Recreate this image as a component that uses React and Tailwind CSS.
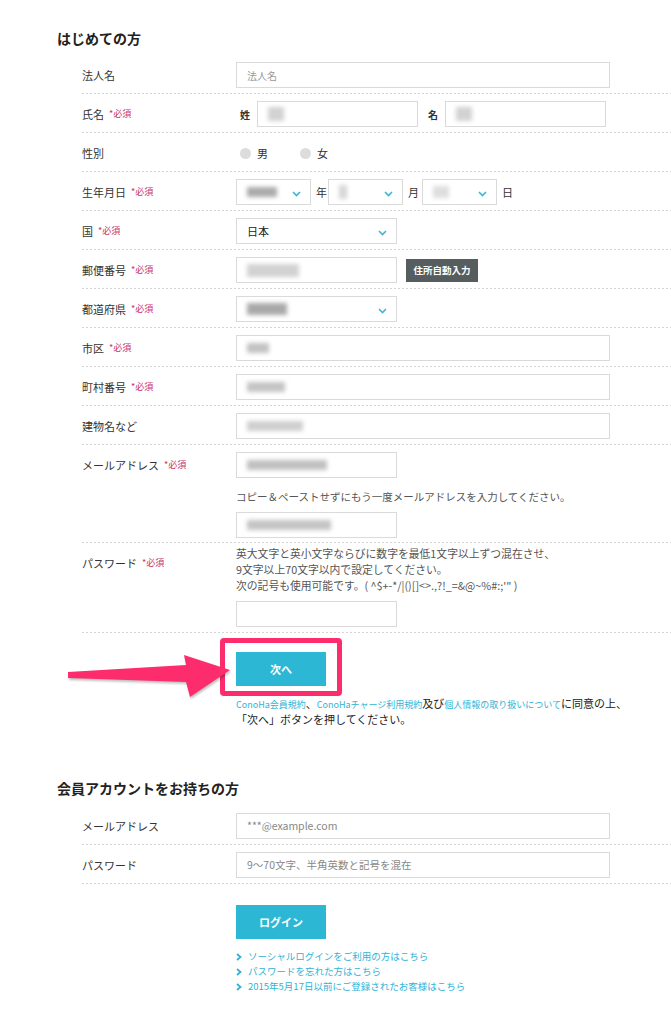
import React from "react";

const Dots = () => (
  <div className="h-px w-full bg-[linear-gradient(to_right,#d4d4d4_50%,transparent_50%)] bg-[length:4px_1px] bg-repeat-x" />
);

const Req = () => (
  <span className="ml-[5px] text-[9px] text-[#c8326a]">*必須</span>
);

const Smudge = ({ cls }) => (
  <span className={"block h-[10px] blur-[2px] " + cls} />
);

const Chevron = () => (
  <svg width="9" height="6" viewBox="0 0 9 6" className="absolute right-[9px] top-[11px]">
    <polyline points="1,1 4.5,4.5 8,1" fill="none" stroke="#3cb6d8" strokeWidth="1.6" />
  </svg>
);

const Box = ({ w, children, select }) => (
  <div className={"relative flex h-[26px] items-center border border-[#dadada] bg-white px-[10px] " + w}>
    {children}
    {select && <Chevron />}
  </div>
);

const Row = ({ label, req, children, labelCls = "" }) => (
  <>
    <div className="flex pt-[7px] pb-[5px]">
      <div className={"flex h-[26px] w-[154px] shrink-0 items-center text-[11px] " + labelCls}>
        {label}
        {req && <Req />}
      </div>
      <div className="flex-1">{children}</div>
    </div>
    <Dots />
  </>
);

const Radio = ({ label }) => (
  <div className="flex items-center">
    <span className="h-[11px] w-[11px] rounded-full bg-[#dcdcdc]" />
    <span className="ml-[6px] text-[11px]">{label}</span>
  </div>
);

const Arrow = () => (
  <svg
    width="175"
    height="65"
    viewBox="0 0 175 65"
    className="absolute left-[-176px] top-[-12px] drop-shadow-[1px_2px_1px_rgba(0,0,0,0.25)]"
  >
    <polygon
      points="8,32 126,25 124,15 170,30 130,57 126,42 8,38"
      fill="#fd2c6d"
    />
  </svg>
);

const Link = ({ children }) => (
  <div className="flex items-center leading-[15px]">
    <svg width="6" height="8" viewBox="0 0 6 8" className="mr-[6px]">
      <polyline points="1,1 4.5,4 1,7" fill="none" stroke="#2fb3d6" strokeWidth="1.8" />
    </svg>
    <span className="text-[9.5px] text-[#2fb3d6]">{children}</span>
  </div>
);

export default function App() {
  return (
    <div className="min-h-[1024px] w-[671px] bg-white pb-[30px] font-['Noto_Sans_CJK_JP',sans-serif] text-[#333]">
      <div className="pl-[57px] pt-[29px]">
        <h2 className="text-[14px] font-bold leading-[18px] text-[#222]">はじめての方</h2>
      </div>

      <div className="ml-[82px] mt-[8px]">
        <Row label="法人名">
          <Box w="w-[374px]">
            <span className="text-[10px] text-[#999]">法人名</span>
          </Box>
        </Row>

        <Row label="氏名" req>
          <div className="flex items-center">
            <span className="ml-[4px] text-[10px] font-bold">姓</span>
            <div className="ml-[7px]">
              <Box w="w-[161px]">
                <Smudge cls="w-[16px] h-[14px] bg-[#d2d2d2]" />
              </Box>
            </div>
            <span className="ml-[10px] text-[10px] font-bold">名</span>
            <div className="ml-[7px]">
              <Box w="w-[161px]">
                <Smudge cls="w-[16px] h-[14px] bg-[#d2d2d2]" />
              </Box>
            </div>
          </div>
        </Row>

        <Row label="性別">
          <div className="flex h-[26px] items-center gap-[32px] pl-[4px]">
            <Radio label="男" />
            <Radio label="女" />
          </div>
        </Row>

        <Row label="生年月日" req>
          <div className="flex items-center text-[11px]">
            <Box w="w-[75px]" select>
              <Smudge cls="w-[30px] bg-[#ababab]" />
            </Box>
            <span className="ml-[5px] mr-[1px]">年</span>
            <Box w="w-[75px]" select>
              <Smudge cls="w-[8px] h-[14px] bg-[#d6d6d6]" />
            </Box>
            <span className="ml-[5px] mr-[3px]">月</span>
            <Box w="w-[75px]" select>
              <Smudge cls="w-[16px] h-[12px] bg-[#dedede]" />
            </Box>
            <span className="ml-[5px]">日</span>
          </div>
        </Row>

        <Row label="国" req>
          <Box w="w-[161px]" select>
            <span className="text-[11px] text-[#222]">日本</span>
          </Box>
        </Row>

        <Row label="郵便番号" req>
          <div className="flex items-center">
            <Box w="w-[161px]">
              <Smudge cls="w-[52px] h-[13px] bg-[#d2d2d2]" />
            </Box>
            <button className="ml-[9px] h-[23px] w-[72px] bg-[#555d5e] text-[9.5px] font-bold text-white">
              住所自動入力
            </button>
          </div>
        </Row>

        <Row label="都道府県" req>
          <Box w="w-[161px]" select>
            <Smudge cls="w-[40px] h-[12px] bg-[#a9a9a9]" />
          </Box>
        </Row>

        <Row label="市区" req>
          <Box w="w-[374px]">
            <Smudge cls="w-[22px] bg-[#c2c2c2]" />
          </Box>
        </Row>

        <Row label="町村番号" req>
          <Box w="w-[374px]">
            <Smudge cls="w-[38px] bg-[#c4c4c4]" />
          </Box>
        </Row>

        <Row label="建物名など">
          <Box w="w-[374px]">
            <Smudge cls="w-[56px] h-[8px] bg-[#cfcfcf]" />
          </Box>
        </Row>

        <div className="flex pt-[7px] pb-[4px]">
          <div className="flex h-[26px] w-[154px] shrink-0 items-center text-[11px]">
            メールアドレス
            <Req />
          </div>
          <div className="flex-1">
            <Box w="w-[161px]">
              <Smudge cls="w-[80px] bg-[#c0c0c0]" />
            </Box>
            <p className="mt-[12px] text-[10.5px] leading-[14px] text-[#555]">
              コピー＆ペーストせずにもう一度メールアドレスを入力してください。
            </p>
            <div className="mt-[8px]">
              <Box w="w-[161px]">
                <Smudge cls="w-[84px] bg-[#c4c4c4]" />
              </Box>
            </div>
          </div>
        </div>
        <Dots />

        <div className="flex pt-[2px] pb-[5px]">
          <div className="flex h-[26px] w-[154px] shrink-0 items-center pt-[10px] text-[11px]">
            パスワード
            <Req />
          </div>
          <div className="flex-1">
            <p className="text-[10.8px] leading-[16px] text-[#555]">
              英大文字と英小文字ならびに数字を最低1文字以上ずつ混在させ、
              <br />
              9文字以上70文字以内で設定してください。
              <br />
              次の記号も使用可能です。( ^$+-*/|()[]{}&lt;&gt;.,?!_=&amp;@~%#:;'" )
            </p>
            <div className="mt-[8px]">
              <Box w="w-[161px]">
                <span />
              </Box>
            </div>
          </div>
        </div>
        <Dots />
      </div>

      <div className="ml-[236px] mt-[19px]">
        <div className="relative w-[90px]">
          <div className="absolute left-[-16px] top-[-14px] h-[58px] w-[122px] rounded-[4px] border-[5px] border-[#fd2c6d]" />
          <Arrow />
          <button className="relative h-[34px] w-[90px] bg-[#2cb7d5] text-[11px] font-bold text-white">
            次へ
          </button>
        </div>
        <div className="mt-[10px] text-[11px] leading-[15px] text-[#222]">
          <p>
            <span className="text-[9px] text-[#2fb3d6]">ConoHa会員規約</span>、
            <span className="text-[9px] text-[#2fb3d6]">ConoHaチャージ利用規約</span>及び
            <span className="text-[9px] text-[#2fb3d6]">個人情報の取り扱いについて</span>に同意の上、
          </p>
          <p>「次へ」ボタンを押してください。</p>
        </div>
      </div>

      <div className="pl-[57px] pt-[52px]">
        <h2 className="text-[14px] font-bold leading-[18px] text-[#222]">会員アカウントをお持ちの方</h2>
      </div>

      <div className="ml-[82px] mt-[9px]">
        <Row label="メールアドレス">
          <Box w="w-[374px]">
            <span className="text-[10.5px] text-[#888]">***@example.com</span>
          </Box>
        </Row>
        <Row label="パスワード">
          <Box w="w-[374px]">
            <span className="text-[10.5px] text-[#888]">9〜70文字、半角英数と記号を混在</span>
          </Box>
        </Row>
      </div>

      <div className="ml-[236px] mt-[21px]">
        <button className="h-[34px] w-[90px] bg-[#2cb7d5] text-[11px] font-bold text-white">
          ログイン
        </button>
        <div className="mt-[10px]">
          <Link>ソーシャルログインをご利用の方はこちら</Link>
          <Link>パスワードを忘れた方はこちら</Link>
          <Link>2015年5月17日以前にご登録されたお客様はこちら</Link>
        </div>
      </div>
    </div>
  );
}
